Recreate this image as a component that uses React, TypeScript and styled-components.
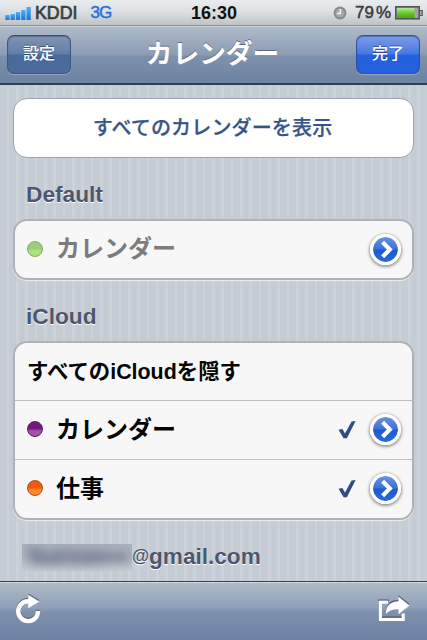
import type { ReactNode } from 'react'
import styled, { createGlobalStyle } from 'styled-components'

const GlobalStyle = createGlobalStyle`
  * {
    box-sizing: border-box;
  }
  body {
    margin: 0;
    background: #000;
    font-family: "Liberation Sans", "Noto Sans CJK JP", sans-serif;
  }
  button {
    font-family: inherit;
    padding: 0;
  }
  svg {
    display: block;
  }
`;

const Screen = styled.div`
  display: flex;
  flex-direction: column;
  width: 427px;
  height: 640px;
  overflow: hidden;
`;

const StatusBar = styled.header`
  display: grid;
  grid-template-columns: 1fr auto 1fr;
  align-items: center;
  height: 26px;
  padding: 1px 4px 0 5px;
  background: linear-gradient(#e9edf0, #dadee0 50%, #bfc3c6);
  border-bottom: 1px solid #8b8f94;
`;

const StatusGroup = styled.div<{ $end?: boolean }>`
  display: flex;
  align-items: center;
  justify-content: ${p => (p.$end ? 'flex-end' : 'flex-start')};
`;

const Carrier = styled.span`
  margin-left: 3px;
  font-size: 17.8px;
  line-height: 24px;
  color: #3c3c3e;
  -webkit-text-stroke: 0.7px #3c3c3e;
`;

const Network = styled.span`
  margin-left: 13px;
  font-size: 17px;
  line-height: 24px;
  letter-spacing: -1px;
  color: #2b6fd8;
  -webkit-text-stroke: 0.5px #2b6fd8;
`;

const Clock = styled.span`
  font-size: 18px;
  font-weight: bold;
  line-height: 24px;
  color: #111;
`;

const Percent = styled.span`
  margin: 0 4px 0 8px;
  font-size: 17px;
  line-height: 24px;
  color: #3c3c3e;
  -webkit-text-stroke: 0.5px #3c3c3e;

  span {
    margin-left: 2px;
  }
`;

const NavBar = styled.nav`
  display: flex;
  flex: none;
  align-items: center;
  justify-content: space-between;
  height: 59px;
  padding: 0 7px 2px;
  background: linear-gradient(#afbbc8, #8b9bb3 50%, #7e90ac 52%, #6d83a3);
  border-top: 1px solid #cbd3dc;
  border-bottom: 2px solid #303c50;
`;

const Title = styled.h1`
  margin: 0 0 0 -2px;
  font-size: 26.7px;
  font-weight: 700;
  line-height: 36px;
  color: #fff;
  text-shadow: 0 -1px 0 #5d6b80;
`;

const NavButton = styled.button<{ $primary?: boolean }>`
  width: 64px;
  height: 39px;
  border: 1px solid ${p => (p.$primary ? '#3150a0' : '#40567b')};
  border-top-color: ${p => (p.$primary ? '#3c5089' : '#3d4c68')};
  border-radius: 7px;
  background: ${p =>
    p.$primary
      ? 'linear-gradient(#7b9ce5, #4678e3 49%, #2460df 51%, #2561de)'
      : 'linear-gradient(#8495b1, #5f7da9 49%, #486a9b 51%, #4b6c9d)'};
  box-shadow: inset 0 1px 1px rgba(30, 45, 90, 0.35), 0 1px 0 rgba(255, 255, 255, 0.25);
  color: #fff;
  font-size: 16px;
  font-weight: 500;
  line-height: 20px;
  text-shadow: 0 -1px 0 rgba(0, 0, 0, 0.4);
`;

const Content = styled.main`
  flex: 1;
  min-height: 0;
  padding: 13px 13px 0;
  overflow: hidden;
  background: repeating-linear-gradient(
    90deg,
    #c5ccd4 0,
    #c5ccd4 6.8px,
    #cbd2d9 6.8px,
    #cbd2d9 9.33px
  );
`;

const ShowAll = styled.button`
  display: block;
  width: 100%;
  height: 60px;
  padding: 0 2px 3px 0;
  border: 1.5px solid #a0a3a9;
  border-radius: 14px;
  background: #fff;
  color: #385487;
  font-size: 20px;
  font-weight: 500;
  letter-spacing: 0.15px;
  -webkit-text-stroke: 0.25px #385487;
`;

const GroupTitle = styled.h2`
  display: flex;
  align-items: center;
  height: 26px;
  margin: 23px 0 12px 13px;
  font-size: 22.7px;
  font-weight: bold;
  color: #4c566c;
  text-shadow: 0 1px 0 #fff;

  ul + & {
    margin-top: 23px;
  }
`;

const List = styled.ul`
  margin: 0;
  padding: 0;
  list-style: none;
  border: 2px solid #b0b2b6;
  border-radius: 14px;
  background: #f7f7f7;
  box-shadow: 0 1px 0 #e9ecef;
`;

const Row = styled.li`
  display: flex;
  align-items: center;
  height: 57px;
  padding: 0 11px 2px 12px;

  & + & {
    height: 59px;
    border-top: 1px solid #bdbec0;
  }
`;

const Dot = styled.span<{ $from: string; $to: string; $edge: string }>`
  flex: none;
  width: 16px;
  height: 16px;
  border: 1px solid ${p => p.$edge};
  border-radius: 50%;
  background: linear-gradient(${p => p.$from} 45%, ${p => p.$to} 65%);
`;

const Name = styled.span<{ $muted?: boolean }>`
  flex: 1;
  margin: 1px 0 0 13px;
  font-size: 24px;
  font-weight: 700;
  line-height: 32px;
  color: ${p => (p.$muted ? '#7c7c7c' : '#050505')};
`;

const HideAll = styled.span`
  margin-top: 2px;
  font-size: 21.4px;
  font-weight: 700;
  line-height: 30px;
  color: #050505;
`;

const Disclosure = styled.button`
  display: flex;
  align-items: center;
  justify-content: center;
  width: 31px;
  height: 31px;
  margin-top: 1px;
  border: 3px solid #fff;
  border-radius: 50%;
  background: linear-gradient(#6c93df, #3a71d8 48%, #1d59ce 52%, #2869df);
  background-clip: padding-box;
  box-shadow: 0 1px 3px 1px rgba(0, 0, 0, 0.4);
`;

const CheckMark = styled.svg`
  margin: 2px 14px 0 0;
`;

const Account = styled(GroupTitle)`
  margin-left: 9px;
  font-size: 22.6px;

  ul + & {
    margin-top: 24px;
  }
`;

const AtSign = styled.span`
  width: 17px;
  font-size: 17.5px;
  margin-top: -2px;
`;

const Masked = styled.span`
  width: 110px;
  height: 27px;
  overflow: hidden;
  background: linear-gradient(#a9b0bc, #b2b9c4 60%, #c3cad2);

  svg {
    filter: blur(5px);
  }
`;

const Toolbar = styled.footer`
  display: flex;
  flex: none;
  align-items: center;
  justify-content: space-between;
  height: 59px;
  padding: 0 16px 4px 15px;
  background: linear-gradient(#afbbc8, #8fa0b8 44%, #7e90ae 52%, #6d83a3);
  border-top: 1px solid #394252;
  box-shadow: inset 0 1px 0 #d0d7df;
`;

function Signal() {
  return (
    <svg width="27" height="15" viewBox="0 0 27 15">
      <defs>
        <linearGradient id="bars" x1="0" y1="0" x2="0" y2="1">
          <stop offset="0" stopColor="#4bb0f5" />
          <stop offset="1" stopColor="#1976dc" />
        </linearGradient>
      </defs>
      {[5, 6, 8, 10, 13].map((h, i) => (
        <rect key={i} x={0.3 + i * 5.3} y={14 - h} width="4.3" height={h} fill="url(#bars)" />
      ))}
    </svg>
  )
}

function AlarmClock() {
  return (
    <svg width="14" height="14" viewBox="0 0 14 14">
      <circle cx="7" cy="7" r="6.4" fill="#85898d" />
      <circle cx="7" cy="7" r="4.5" fill="#a4a8ab" />
      <path d="M7.3 3v4.5H4" fill="none" stroke="#f2f4f5" strokeWidth="1.5" />
    </svg>
  )
}

function Battery() {
  return (
    <svg width="28" height="14" viewBox="0 0 28 14">
      <defs>
        <linearGradient id="charge" x1="0" y1="0" x2="0" y2="1">
          <stop offset="0" stopColor="#b8ed92" />
          <stop offset="0.45" stopColor="#6fce3c" />
          <stop offset="1" stopColor="#3fa711" />
        </linearGradient>
      </defs>
      <rect x="0.8" y="0.8" width="23.4" height="12" fill="#a1a5a7" stroke="#4d5154" strokeWidth="1.5" />
      <rect x="2" y="2" width="17.5" height="9.8" fill="url(#charge)" />
      <path d="M25 4.5h2.2v5H25" fill="#aaa" stroke="#55595c" strokeWidth="1.2" />
    </svg>
  )
}

function Check() {
  return (
    <CheckMark width="18" height="20" viewBox="0 0 18 20">
      <path d="M.5 9.7 4.4 8.9 7 13.4 13.6 1.4 17.6 1 8.9 18.3H5.6Z" fill="#324c7d" />
    </CheckMark>
  )
}

function DetailButton() {
  return (
    <Disclosure aria-label="詳細">
      <svg width="25" height="25" viewBox="0 0 25 25">
        <path d="M9.6 5.2 16.8 12.5 9.6 19.8" fill="none" stroke="#fff" strokeWidth="4.2" />
      </svg>
    </Disclosure>
  )
}

function Refresh() {
  return (
    <svg width="27" height="32" viewBox="0 0 27 32">
      <path d="M14.2 8.3C7.4 7.6 3.2 12.8 3.2 18.6a9.8 9.8 0 0 0 19.8-.8" fill="none" stroke="#526079" strokeWidth="4.4" transform="translate(0 -1)" />
      <path d="M13.2 .5 24.4 7.3 13.2 14.2Z" fill="#526079" />
      <path d="M14.2 8.3C7.4 7.6 3.2 12.8 3.2 18.6a9.8 9.8 0 0 0 19.8-.8" fill="none" stroke="#fff" strokeWidth="4.4" />
      <path d="M13.2 1.8 24.4 8.4 13.2 15.2Z" fill="#fff" />
    </svg>
  )
}

function Share() {
  return (
    <svg width="33" height="28" viewBox="0 0 33 28">
      <path d="M1 6V5h9v1M4 22h20" fill="none" stroke="#4c5668" strokeWidth="1.2" />
      <path d="M10 7.3H2.4v17.2h22.8v-6" fill="none" stroke="#fff" strokeWidth="3" />
      <path d="M20.5.2 31.5 9 30 10.5 20.5 3ZM7.8 17.8C8.2 9.2 12 5.2 20.5 5v2.5C12 8 9 12 7.8 17.8Z" fill="#4c5668" />
      <path d="M20.5 1.6 31.5 10.4 20.5 19.2V14.2C14.8 13.8 11.2 15.2 7.8 19 8 10.7 12.2 6.6 20.5 6.3Z" fill="#fff" />
    </svg>
  )
}

interface CalendarRowProps {
  children: ReactNode
  colors: [string, string, string]
  checked?: boolean
}

function CalendarRow({ children, colors, checked }: CalendarRowProps) {
  return (
    <Row>
      <Dot $from={colors[0]} $to={colors[1]} $edge={colors[2]} />
      <Name $muted={!checked}>{children}</Name>
      {checked && <Check />}
      <DetailButton />
    </Row>
  )
}

const App: React.FC = () => {
  return (
    <Screen>
      <GlobalStyle />
      <StatusBar>
        <StatusGroup>
          <Signal />
          <Carrier>KDDI</Carrier>
          <Network>3G</Network>
        </StatusGroup>
        <Clock>16:30</Clock>
        <StatusGroup $end>
          <AlarmClock />
          <Percent>79<span>%</span></Percent>
          <Battery />
        </StatusGroup>
      </StatusBar>

      <NavBar>
        <NavButton>設定</NavButton>
        <Title>カレンダー</Title>
        <NavButton $primary>完了</NavButton>
      </NavBar>

      <Content>
        <ShowAll>すべてのカレンダーを表示</ShowAll>

        <GroupTitle>Default</GroupTitle>
        <List>
          <CalendarRow colors={['#9bcc7c', '#a9e381', '#7fab66']}>カレンダー</CalendarRow>
        </List>

        <GroupTitle>iCloud</GroupTitle>
        <List>
          <Row>
            <HideAll>すべてのiCloudを隠す</HideAll>
          </Row>
          <CalendarRow colors={['#73177d', '#a055a6', '#571b60']} checked>カレンダー</CalendarRow>
          <CalendarRow colors={['#ed5a0b', '#ff8530', '#b64b12']} checked>仕事</CalendarRow>
        </List>

        <Account>
          {/* hidden local part of the address */}
          <Masked>
            <svg width="110" height="27" viewBox="0 0 110 27">
              <path d="M4 4h16v16H10ZM20 8h15v12H20ZM35 5h9v15h-9ZM46 6h12v14H46ZM59 7h15v13H59ZM74 7h11v12H74ZM86 8h10v10H86ZM97 8h9v10h-9Z" fill="#7d8699" />
            </svg>
          </Masked>
          <AtSign>@</AtSign>gmail.com
        </Account>
      </Content>

      <Toolbar>
        <Refresh />
        <Share />
      </Toolbar>
    </Screen>
  )
}

export default App
